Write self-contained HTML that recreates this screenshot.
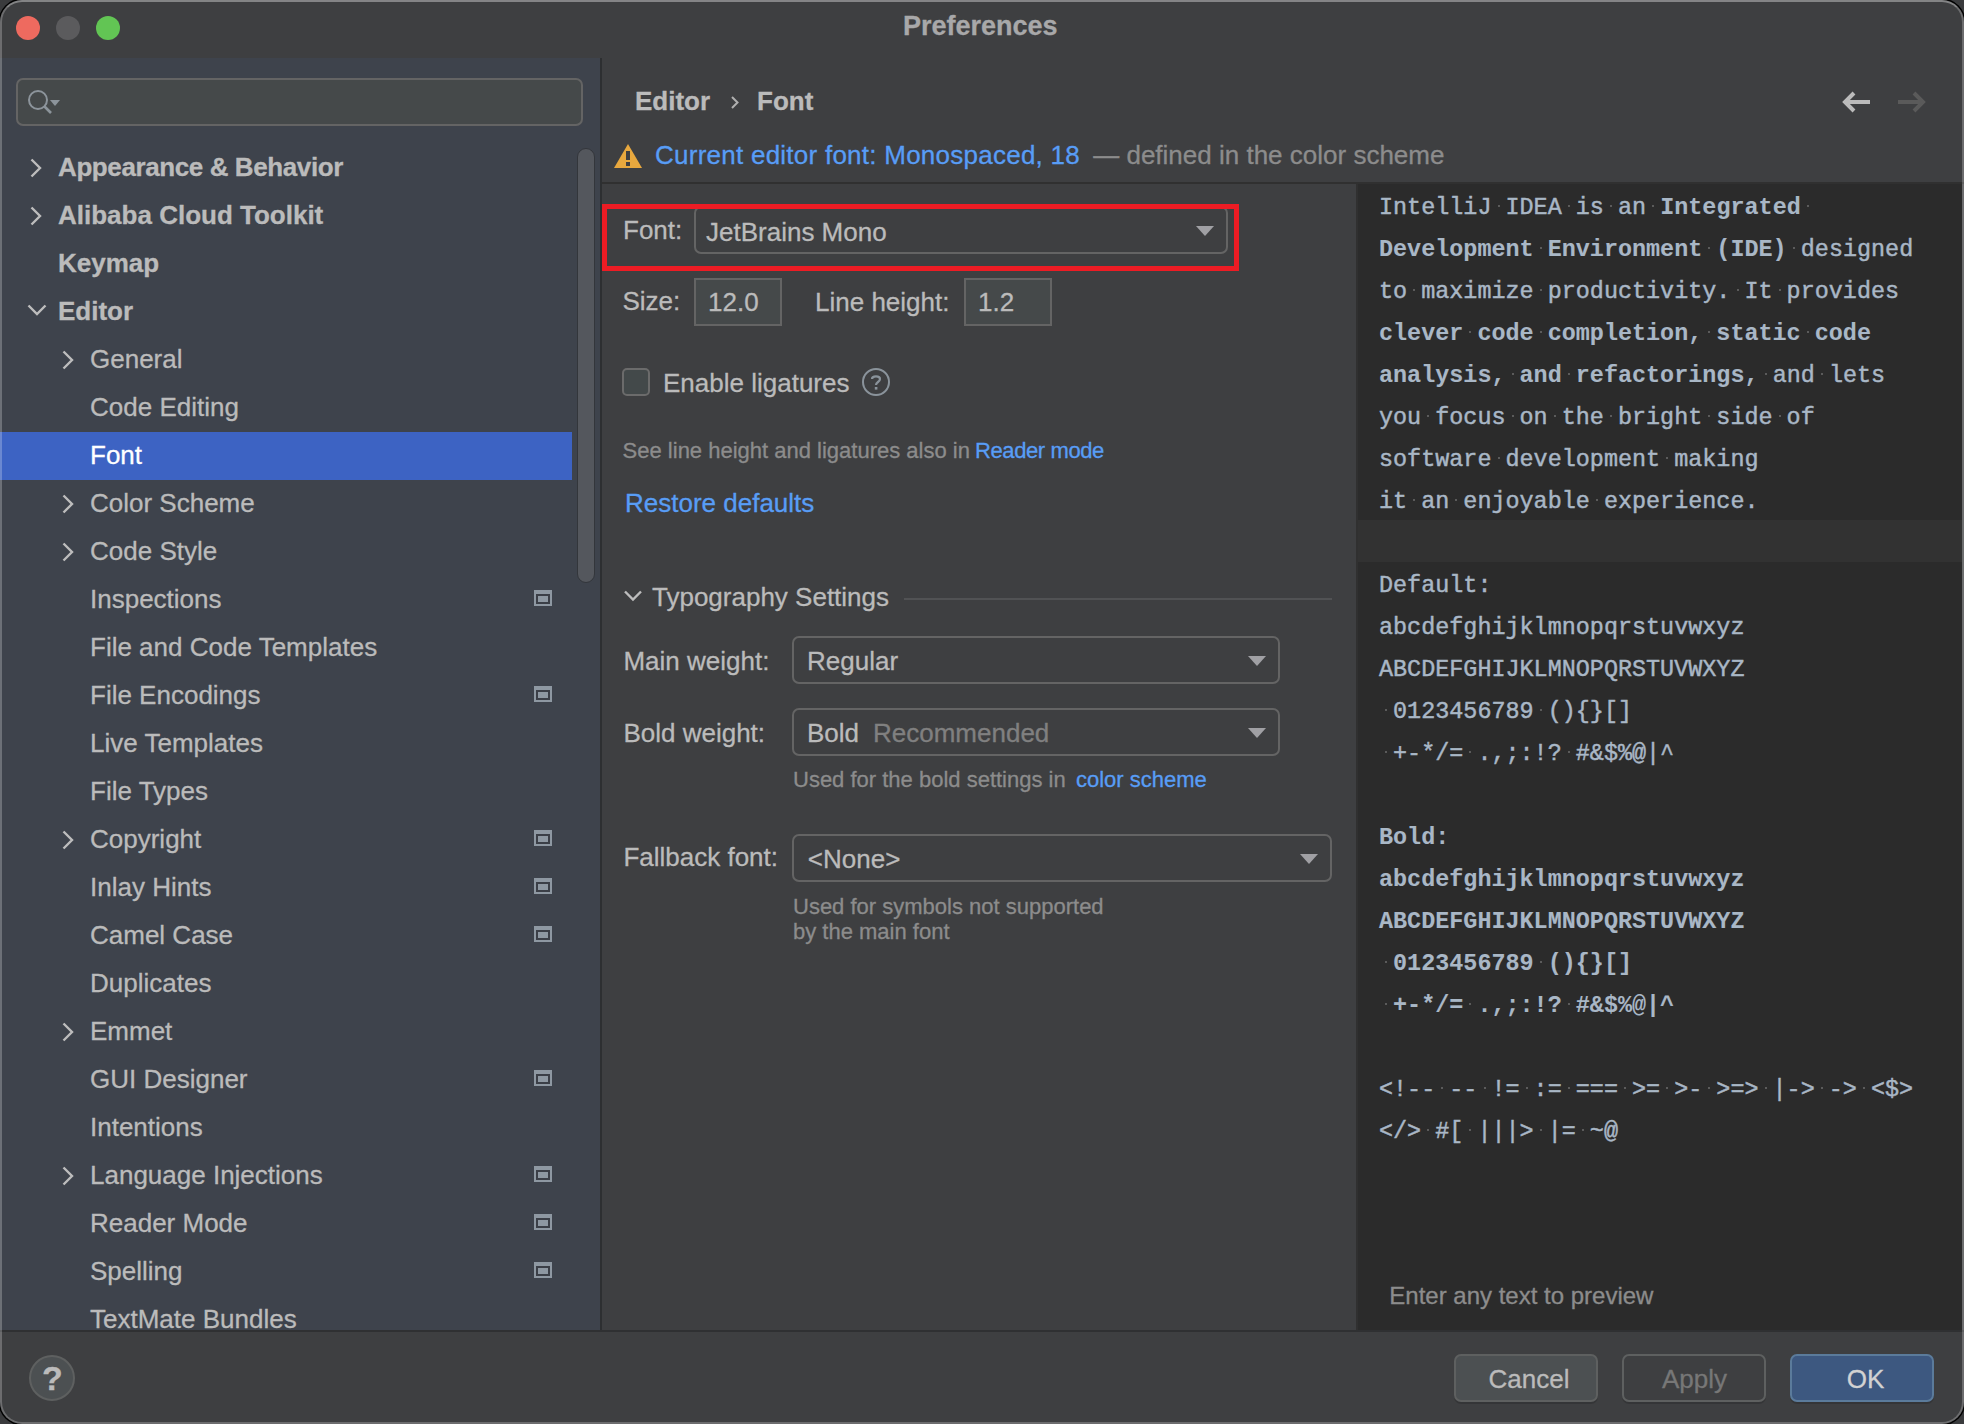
<!DOCTYPE html>
<html><head><meta charset="utf-8"><title>Preferences</title>
<style>
html,body{margin:0;padding:0;}
body{width:1964px;height:1424px;background:#3a3b3d;position:relative;overflow:hidden;font-family:'Liberation Sans',sans-serif;}
.win{position:absolute;left:0;top:0;width:1964px;height:1424px;border-radius:22px;overflow:hidden;background:#3e3f41;}
.t{position:absolute;white-space:pre;-webkit-text-stroke-width:0.3px;}
.m{position:absolute;white-space:pre;font-family:'Liberation Mono',monospace;font-size:23.43px;line-height:42px;color:#a9b7c6;-webkit-text-stroke:0.45px #a9b7c6;}
.m.b{-webkit-text-stroke:0.1px #a9b7c6;}
.dot{position:absolute;width:2px;height:2px;background:#5b5b5b;}
</style></head><body>
<div class="win">

<div style="position:absolute;left:0px;top:0px;width:1964px;height:58px;background:#3e3f41;"></div>
<div style="position:absolute;left:16px;top:16px;width:24px;height:24px;border-radius:50%;background:#ee6a5f;"></div>
<div style="position:absolute;left:56px;top:16px;width:24px;height:24px;border-radius:50%;background:#5b5b5d;"></div>
<div style="position:absolute;left:96px;top:16px;width:24px;height:24px;border-radius:50%;background:#62c554;"></div>
<div class="t" style="left:903.0px;top:12.7px;font-size:27px;line-height:27px;color:#a8a8a9;font-weight:bold;">Preferences</div>
<div style="position:absolute;left:0px;top:58px;width:600px;height:1272px;background:#3e434c;"></div>
<div style="position:absolute;left:600px;top:58px;width:2px;height:1272px;background:#2d2f31;"></div>
<div style="position:absolute;left:16px;top:78px;width:567px;height:48px;box-sizing:border-box;border:2px solid #646464;border-radius:7px;background:#45494a;"></div>
<svg style="position:absolute;left:26px;top:88px" width="40" height="30" viewBox="0 0 40 30">
<circle cx="12" cy="12" r="9" fill="none" stroke="#8c949b" stroke-width="2"/>
<line x1="18.5" y1="18.5" x2="25" y2="25" stroke="#8c949b" stroke-width="2.6"/>
<path d="M24 12 L34 12 L29 18 Z" fill="#8c949b"/>
</svg>
<div style="position:absolute;left:0;top:58px;width:600px;height:1272px;overflow:hidden;">
<div class="t" style="left:58.0px;top:96.0px;font-size:26px;line-height:26px;color:#bbbbbb;font-weight:bold;letter-spacing:-0.4px;">Appearance &amp; Behavior</div>
<svg style="position:absolute;left:28px;top:98.5px" width="16" height="22" viewBox="0 0 16 22"><path d="M3.5 2.5 L12 11 L3.5 19.5" fill="none" stroke="#bdbdbd" stroke-width="2.4"/></svg>
<div class="t" style="left:58.0px;top:144.0px;font-size:26px;line-height:26px;color:#bbbbbb;font-weight:bold;">Alibaba Cloud Toolkit</div>
<svg style="position:absolute;left:28px;top:146.5px" width="16" height="22" viewBox="0 0 16 22"><path d="M3.5 2.5 L12 11 L3.5 19.5" fill="none" stroke="#bdbdbd" stroke-width="2.4"/></svg>
<div class="t" style="left:58.0px;top:192.0px;font-size:26px;line-height:26px;color:#bbbbbb;font-weight:bold;">Keymap</div>
<div class="t" style="left:58.0px;top:240.0px;font-size:26px;line-height:26px;color:#bbbbbb;font-weight:bold;">Editor</div>
<svg style="position:absolute;left:26px;top:244px" width="22" height="16" viewBox="0 0 22 16"><path d="M2.5 3.5 L11 12 L19.5 3.5" fill="none" stroke="#bdbdbd" stroke-width="2.4"/></svg>
<div class="t" style="left:90.0px;top:288.0px;font-size:26px;line-height:26px;color:#bbbbbb;font-weight:normal;">General</div>
<svg style="position:absolute;left:60px;top:290.5px" width="16" height="22" viewBox="0 0 16 22"><path d="M3.5 2.5 L12 11 L3.5 19.5" fill="none" stroke="#bdbdbd" stroke-width="2.4"/></svg>
<div class="t" style="left:90.0px;top:336.0px;font-size:26px;line-height:26px;color:#bbbbbb;font-weight:normal;">Code Editing</div>
<div style="position:absolute;left:0px;top:374px;width:572px;height:48px;background:#3d63c3;"></div>
<div class="t" style="left:90.0px;top:384.0px;font-size:26px;line-height:26px;color:#ffffff;font-weight:normal;">Font</div>
<div class="t" style="left:90.0px;top:432.0px;font-size:26px;line-height:26px;color:#bbbbbb;font-weight:normal;">Color Scheme</div>
<svg style="position:absolute;left:60px;top:434.5px" width="16" height="22" viewBox="0 0 16 22"><path d="M3.5 2.5 L12 11 L3.5 19.5" fill="none" stroke="#bdbdbd" stroke-width="2.4"/></svg>
<div class="t" style="left:90.0px;top:480.0px;font-size:26px;line-height:26px;color:#bbbbbb;font-weight:normal;">Code Style</div>
<svg style="position:absolute;left:60px;top:482.5px" width="16" height="22" viewBox="0 0 16 22"><path d="M3.5 2.5 L12 11 L3.5 19.5" fill="none" stroke="#bdbdbd" stroke-width="2.4"/></svg>
<div class="t" style="left:90.0px;top:528.0px;font-size:26px;line-height:26px;color:#bbbbbb;font-weight:normal;">Inspections</div>
<div style="position:absolute;left:534px;top:532px;width:18px;height:16px;background:#8e98a2;"></div>
<div style="position:absolute;left:536px;top:536px;width:10px;height:6px;border:2px solid #3b3f47;background:#8e98a2;"></div>
<div class="t" style="left:90.0px;top:576.0px;font-size:26px;line-height:26px;color:#bbbbbb;font-weight:normal;">File and Code Templates</div>
<div class="t" style="left:90.0px;top:624.0px;font-size:26px;line-height:26px;color:#bbbbbb;font-weight:normal;">File Encodings</div>
<div style="position:absolute;left:534px;top:628px;width:18px;height:16px;background:#8e98a2;"></div>
<div style="position:absolute;left:536px;top:632px;width:10px;height:6px;border:2px solid #3b3f47;background:#8e98a2;"></div>
<div class="t" style="left:90.0px;top:672.0px;font-size:26px;line-height:26px;color:#bbbbbb;font-weight:normal;">Live Templates</div>
<div class="t" style="left:90.0px;top:720.0px;font-size:26px;line-height:26px;color:#bbbbbb;font-weight:normal;">File Types</div>
<div class="t" style="left:90.0px;top:768.0px;font-size:26px;line-height:26px;color:#bbbbbb;font-weight:normal;">Copyright</div>
<svg style="position:absolute;left:60px;top:770.5px" width="16" height="22" viewBox="0 0 16 22"><path d="M3.5 2.5 L12 11 L3.5 19.5" fill="none" stroke="#bdbdbd" stroke-width="2.4"/></svg>
<div style="position:absolute;left:534px;top:772px;width:18px;height:16px;background:#8e98a2;"></div>
<div style="position:absolute;left:536px;top:776px;width:10px;height:6px;border:2px solid #3b3f47;background:#8e98a2;"></div>
<div class="t" style="left:90.0px;top:816.0px;font-size:26px;line-height:26px;color:#bbbbbb;font-weight:normal;">Inlay Hints</div>
<div style="position:absolute;left:534px;top:820px;width:18px;height:16px;background:#8e98a2;"></div>
<div style="position:absolute;left:536px;top:824px;width:10px;height:6px;border:2px solid #3b3f47;background:#8e98a2;"></div>
<div class="t" style="left:90.0px;top:864.0px;font-size:26px;line-height:26px;color:#bbbbbb;font-weight:normal;">Camel Case</div>
<div style="position:absolute;left:534px;top:868px;width:18px;height:16px;background:#8e98a2;"></div>
<div style="position:absolute;left:536px;top:872px;width:10px;height:6px;border:2px solid #3b3f47;background:#8e98a2;"></div>
<div class="t" style="left:90.0px;top:912.0px;font-size:26px;line-height:26px;color:#bbbbbb;font-weight:normal;">Duplicates</div>
<div class="t" style="left:90.0px;top:960.0px;font-size:26px;line-height:26px;color:#bbbbbb;font-weight:normal;">Emmet</div>
<svg style="position:absolute;left:60px;top:962.5px" width="16" height="22" viewBox="0 0 16 22"><path d="M3.5 2.5 L12 11 L3.5 19.5" fill="none" stroke="#bdbdbd" stroke-width="2.4"/></svg>
<div class="t" style="left:90.0px;top:1008.0px;font-size:26px;line-height:26px;color:#bbbbbb;font-weight:normal;">GUI Designer</div>
<div style="position:absolute;left:534px;top:1012px;width:18px;height:16px;background:#8e98a2;"></div>
<div style="position:absolute;left:536px;top:1016px;width:10px;height:6px;border:2px solid #3b3f47;background:#8e98a2;"></div>
<div class="t" style="left:90.0px;top:1056.0px;font-size:26px;line-height:26px;color:#bbbbbb;font-weight:normal;">Intentions</div>
<div class="t" style="left:90.0px;top:1104.0px;font-size:26px;line-height:26px;color:#bbbbbb;font-weight:normal;">Language Injections</div>
<svg style="position:absolute;left:60px;top:1106.5px" width="16" height="22" viewBox="0 0 16 22"><path d="M3.5 2.5 L12 11 L3.5 19.5" fill="none" stroke="#bdbdbd" stroke-width="2.4"/></svg>
<div style="position:absolute;left:534px;top:1108px;width:18px;height:16px;background:#8e98a2;"></div>
<div style="position:absolute;left:536px;top:1112px;width:10px;height:6px;border:2px solid #3b3f47;background:#8e98a2;"></div>
<div class="t" style="left:90.0px;top:1152.0px;font-size:26px;line-height:26px;color:#bbbbbb;font-weight:normal;">Reader Mode</div>
<div style="position:absolute;left:534px;top:1156px;width:18px;height:16px;background:#8e98a2;"></div>
<div style="position:absolute;left:536px;top:1160px;width:10px;height:6px;border:2px solid #3b3f47;background:#8e98a2;"></div>
<div class="t" style="left:90.0px;top:1200.0px;font-size:26px;line-height:26px;color:#bbbbbb;font-weight:normal;">Spelling</div>
<div style="position:absolute;left:534px;top:1204px;width:18px;height:16px;background:#8e98a2;"></div>
<div style="position:absolute;left:536px;top:1208px;width:10px;height:6px;border:2px solid #3b3f47;background:#8e98a2;"></div>
<div class="t" style="left:90.0px;top:1248.0px;font-size:26px;line-height:26px;color:#bbbbbb;font-weight:normal;">TextMate Bundles</div>
<div style="position:absolute;left:577px;top:90px;width:18px;height:435px;box-sizing:border-box;border:1.5px solid #33363b;border-radius:9px;background:#54575d;"></div>
</div>
<div class="t" style="left:635.0px;top:87.6px;font-size:26px;line-height:26px;color:#bbbbbb;font-weight:bold;">Editor</div>
<svg style="position:absolute;left:728px;top:94px" width="14" height="18" viewBox="0 0 14 18"><path d="M4 3 L9.5 8.5 L4 14" fill="none" stroke="#b0b0b0" stroke-width="2"/></svg>
<div class="t" style="left:757.0px;top:87.6px;font-size:26px;line-height:26px;color:#bbbbbb;font-weight:bold;">Font</div>
<svg style="position:absolute;left:1840px;top:88px" width="34" height="28" viewBox="0 0 34 28"><path d="M5 14 L30 14 M14 5 L5 14 L14 23" fill="none" stroke="#bbbbbb" stroke-width="4" stroke-linejoin="miter"/></svg>
<svg style="position:absolute;left:1894px;top:88px" width="34" height="28" viewBox="0 0 34 28"><path d="M4 14 L29 14 M20 5 L29 14 L20 23" fill="none" stroke="#5a5a5a" stroke-width="4"/></svg>
<svg style="position:absolute;left:613px;top:143px" width="30" height="26" viewBox="0 0 30 26"><path d="M15 1 L29 25 L1 25 Z" fill="#e8a83e"/><rect x="13" y="8" width="4" height="9" fill="#3e3f41"/><rect x="13" y="19" width="4" height="4" fill="#3e3f41"/></svg>
<div class="t" style="left:655.0px;top:142.3px;font-size:26px;line-height:26px;color:#589df6;font-weight:normal;letter-spacing:0.25px;">Current editor font: Monospaced, 18</div>
<div class="t" style="left:1086.0px;top:142.3px;font-size:26px;line-height:26px;color:#8c8c8c;font-weight:normal;"> — defined in the color scheme</div>
<div style="position:absolute;left:602px;top:182px;width:1362px;height:2px;background:#303030;"></div>
<div style="position:absolute;left:694px;top:206px;width:534px;height:48px;box-sizing:border-box;border:2px solid #646464;border-radius:7px;background:#3e3f41;"></div>
<div class="t" style="left:623.0px;top:216.5px;font-size:26px;line-height:26px;color:#bbbbbb;font-weight:normal;">Font:</div>
<div class="t" style="left:706.0px;top:218.5px;font-size:26px;line-height:26px;color:#bbbbbb;font-weight:normal;">JetBrains Mono</div>
<svg style="position:absolute;left:1196px;top:226px" width="18" height="10" viewBox="0 0 18 10"><path d="M0 0 L18 0 L9 10 Z" fill="#a0a0a4"/></svg>
<div style="position:absolute;left:602px;top:204px;width:637px;height:67px;box-sizing:border-box;border:5px solid #ed1c24;"></div>
<div class="t" style="left:622.5px;top:288.3px;font-size:26px;line-height:26px;color:#bbbbbb;font-weight:normal;">Size:</div>
<div style="position:absolute;left:694px;top:278px;width:88px;height:48px;box-sizing:border-box;border:2px solid #646464;background:#45494a;"></div>
<div class="t" style="left:708.0px;top:288.5px;font-size:26px;line-height:26px;color:#bbbbbb;font-weight:normal;">12.0</div>
<div class="t" style="left:815.0px;top:288.6px;font-size:26px;line-height:26px;color:#bbbbbb;font-weight:normal;">Line height:</div>
<div style="position:absolute;left:964px;top:278px;width:88px;height:48px;box-sizing:border-box;border:2px solid #646464;background:#45494a;"></div>
<div class="t" style="left:978.0px;top:288.5px;font-size:26px;line-height:26px;color:#bbbbbb;font-weight:normal;">1.2</div>
<div style="position:absolute;left:622px;top:368px;width:28px;height:28px;box-sizing:border-box;border:2px solid #6b6b6b;border-radius:5px;background:#43494a;"></div>
<div class="t" style="left:663.0px;top:370.1px;font-size:26px;line-height:26px;color:#bbbbbb;font-weight:normal;">Enable ligatures</div>
<svg style="position:absolute;left:862px;top:368px" width="28" height="28" viewBox="0 0 28 28"><circle cx="14" cy="14" r="13" fill="none" stroke="#8a939b" stroke-width="2"/><path d="M10 11 C10 7.5 18 7.5 18 11 C18 14 14 14 14 17" fill="none" stroke="#8a939b" stroke-width="2.2"/><rect x="12.8" y="19" width="2.6" height="2.6" fill="#8a939b"/></svg>
<div class="t" style="left:622.6px;top:439.5px;font-size:22px;line-height:22px;color:#8c8c8c;font-weight:normal;">See line height and ligatures also in </div>
<div class="t" style="left:975.0px;top:439.5px;font-size:22px;line-height:22px;color:#589df6;font-weight:normal;letter-spacing:-0.4px;">Reader mode</div>
<div class="t" style="left:625.0px;top:489.6px;font-size:26px;line-height:26px;color:#589df6;font-weight:normal;">Restore defaults</div>
<svg style="position:absolute;left:622px;top:588px" width="22" height="16" viewBox="0 0 22 16"><path d="M3 3.5 L11 11.5 L19 3.5" fill="none" stroke="#bdbdbd" stroke-width="2.4"/></svg>
<div class="t" style="left:652.0px;top:584.4px;font-size:26px;line-height:26px;color:#bbbbbb;font-weight:normal;">Typography Settings</div>
<div style="position:absolute;left:904px;top:598px;width:428px;height:2px;background:#515254;"></div>
<div class="t" style="left:623.4px;top:647.9px;font-size:26px;line-height:26px;color:#bbbbbb;font-weight:normal;">Main weight:</div>
<div style="position:absolute;left:792px;top:636px;width:488px;height:48px;box-sizing:border-box;border:2px solid #646464;border-radius:7px;"></div>
<div class="t" style="left:807.0px;top:648.0px;font-size:26px;line-height:26px;color:#bbbbbb;font-weight:normal;">Regular</div>
<svg style="position:absolute;left:1248px;top:656px" width="18" height="10" viewBox="0 0 18 10"><path d="M0 0 L18 0 L9 10 Z" fill="#a0a0a4"/></svg>
<div class="t" style="left:623.4px;top:720.3px;font-size:26px;line-height:26px;color:#bbbbbb;font-weight:normal;">Bold weight:</div>
<div style="position:absolute;left:792px;top:708px;width:488px;height:48px;box-sizing:border-box;border:2px solid #646464;border-radius:7px;"></div>
<div class="t" style="left:807.0px;top:720.3px;font-size:26px;line-height:26px;color:#bbbbbb;font-weight:normal;">Bold</div>
<div class="t" style="left:873.0px;top:720.3px;font-size:26px;line-height:26px;color:#808080;font-weight:normal;">Recommended</div>
<svg style="position:absolute;left:1248px;top:728px" width="18" height="10" viewBox="0 0 18 10"><path d="M0 0 L18 0 L9 10 Z" fill="#a0a0a4"/></svg>
<div class="t" style="left:793.0px;top:769.4px;font-size:22px;line-height:22px;color:#8c8c8c;font-weight:normal;">Used for the bold settings in </div>
<div class="t" style="left:1076.0px;top:769.4px;font-size:22px;line-height:22px;color:#589df6;font-weight:normal;">color scheme</div>
<div class="t" style="left:623.4px;top:844.0px;font-size:26px;line-height:26px;color:#bbbbbb;font-weight:normal;">Fallback font:</div>
<div style="position:absolute;left:792px;top:834px;width:540px;height:48px;box-sizing:border-box;border:2px solid #646464;border-radius:7px;"></div>
<div class="t" style="left:807.8px;top:846.2px;font-size:26px;line-height:26px;color:#bbbbbb;font-weight:normal;">&lt;None&gt;</div>
<svg style="position:absolute;left:1300px;top:854px" width="18" height="10" viewBox="0 0 18 10"><path d="M0 0 L18 0 L9 10 Z" fill="#a0a0a4"/></svg>
<div class="t" style="left:793.0px;top:895.5px;font-size:22px;line-height:22px;color:#8c8c8c;font-weight:normal;">Used for symbols not supported</div>
<div class="t" style="left:793.0px;top:921.4px;font-size:22px;line-height:22px;color:#8c8c8c;font-weight:normal;">by the main font</div>
<div style="position:absolute;left:1356px;top:184px;width:606px;height:1146px;background:#2b2b2b;"></div>
<div style="position:absolute;left:1356px;top:520px;width:606px;height:42px;background:#323232;"></div>
<div style="position:absolute;left:1356px;top:184px;width:2px;height:1146px;background:#303030;"></div>
<div class="m" style="left:1379.00px;top:187px;font-weight:normal">IntelliJ IDEA is an </div>
<div class="dot" style="left:1497.5px;top:204.5px"></div>
<div class="dot" style="left:1567.8px;top:204.5px"></div>
<div class="dot" style="left:1610.0px;top:204.5px"></div>
<div class="dot" style="left:1652.2px;top:204.5px"></div>
<div class="m b" style="left:1660.20px;top:187px;font-weight:bold">Integrated </div>
<div class="dot" style="left:1806.8px;top:204.5px"></div>
<div class="m b" style="left:1379.00px;top:229px;font-weight:bold">Development Environment (IDE)</div>
<div class="dot" style="left:1539.7px;top:246.5px"></div>
<div class="dot" style="left:1708.4px;top:246.5px"></div>
<div class="m" style="left:1786.74px;top:229px;font-weight:normal"> designed</div>
<div class="dot" style="left:1792.8px;top:246.5px"></div>
<div class="m" style="left:1379.00px;top:271px;font-weight:normal">to maximize productivity. It provides</div>
<div class="dot" style="left:1413.2px;top:288.5px"></div>
<div class="dot" style="left:1539.7px;top:288.5px"></div>
<div class="dot" style="left:1736.5px;top:288.5px"></div>
<div class="dot" style="left:1778.7px;top:288.5px"></div>
<div class="m b" style="left:1379.00px;top:313px;font-weight:bold">clever code completion, static code</div>
<div class="dot" style="left:1469.4px;top:330.5px"></div>
<div class="dot" style="left:1539.7px;top:330.5px"></div>
<div class="dot" style="left:1708.4px;top:330.5px"></div>
<div class="dot" style="left:1806.8px;top:330.5px"></div>
<div class="m b" style="left:1379.00px;top:355px;font-weight:bold">analysis, and refactorings,</div>
<div class="dot" style="left:1511.6px;top:372.5px"></div>
<div class="dot" style="left:1567.8px;top:372.5px"></div>
<div class="m" style="left:1758.62px;top:355px;font-weight:normal"> and lets</div>
<div class="dot" style="left:1764.7px;top:372.5px"></div>
<div class="dot" style="left:1820.9px;top:372.5px"></div>
<div class="m" style="left:1379.00px;top:397px;font-weight:normal">you focus on the bright side of</div>
<div class="dot" style="left:1427.2px;top:414.5px"></div>
<div class="dot" style="left:1511.6px;top:414.5px"></div>
<div class="dot" style="left:1553.8px;top:414.5px"></div>
<div class="dot" style="left:1610.0px;top:414.5px"></div>
<div class="dot" style="left:1708.4px;top:414.5px"></div>
<div class="dot" style="left:1778.7px;top:414.5px"></div>
<div class="m" style="left:1379.00px;top:439px;font-weight:normal">software development making</div>
<div class="dot" style="left:1497.5px;top:456.5px"></div>
<div class="dot" style="left:1666.2px;top:456.5px"></div>
<div class="m" style="left:1379.00px;top:481px;font-weight:normal">it an enjoyable experience.</div>
<div class="dot" style="left:1413.2px;top:498.5px"></div>
<div class="dot" style="left:1455.3px;top:498.5px"></div>
<div class="dot" style="left:1595.9px;top:498.5px"></div>
<div class="m" style="left:1379.00px;top:565px;font-weight:normal">Default:</div>
<div class="m" style="left:1379.00px;top:607px;font-weight:normal">abcdefghijklmnopqrstuvwxyz</div>
<div class="m" style="left:1379.00px;top:649px;font-weight:normal">ABCDEFGHIJKLMNOPQRSTUVWXYZ</div>
<div class="m" style="left:1379.00px;top:691px;font-weight:normal"> 0123456789 (){}[]</div>
<div class="dot" style="left:1385.0px;top:708.5px"></div>
<div class="dot" style="left:1539.7px;top:708.5px"></div>
<div class="m" style="left:1379.00px;top:733px;font-weight:normal"> +-*/= .,;:!? #&amp;$%@|^</div>
<div class="dot" style="left:1385.0px;top:750.5px"></div>
<div class="dot" style="left:1469.4px;top:750.5px"></div>
<div class="dot" style="left:1567.8px;top:750.5px"></div>
<div class="m b" style="left:1379.00px;top:817px;font-weight:bold">Bold:</div>
<div class="m b" style="left:1379.00px;top:859px;font-weight:bold">abcdefghijklmnopqrstuvwxyz</div>
<div class="m b" style="left:1379.00px;top:901px;font-weight:bold">ABCDEFGHIJKLMNOPQRSTUVWXYZ</div>
<div class="m b" style="left:1379.00px;top:943px;font-weight:bold"> 0123456789 (){}[]</div>
<div class="dot" style="left:1385.0px;top:960.5px"></div>
<div class="dot" style="left:1539.7px;top:960.5px"></div>
<div class="m b" style="left:1379.00px;top:985px;font-weight:bold"> +-*/= .,;:!? #&amp;$%@|^</div>
<div class="dot" style="left:1385.0px;top:1002.5px"></div>
<div class="dot" style="left:1469.4px;top:1002.5px"></div>
<div class="dot" style="left:1567.8px;top:1002.5px"></div>
<div class="m" style="left:1379.00px;top:1069px;font-weight:normal">&lt;!-- -- != := === &gt;= &gt;- &gt;=&gt; |-&gt; -&gt; &lt;$&gt;</div>
<div class="dot" style="left:1441.3px;top:1086.5px"></div>
<div class="dot" style="left:1483.5px;top:1086.5px"></div>
<div class="dot" style="left:1525.6px;top:1086.5px"></div>
<div class="dot" style="left:1567.8px;top:1086.5px"></div>
<div class="dot" style="left:1624.0px;top:1086.5px"></div>
<div class="dot" style="left:1666.2px;top:1086.5px"></div>
<div class="dot" style="left:1708.4px;top:1086.5px"></div>
<div class="dot" style="left:1764.7px;top:1086.5px"></div>
<div class="dot" style="left:1820.9px;top:1086.5px"></div>
<div class="dot" style="left:1863.1px;top:1086.5px"></div>
<div class="m" style="left:1379.00px;top:1111px;font-weight:normal">&lt;/&gt; #[ |||&gt; |= ~@</div>
<div class="dot" style="left:1427.2px;top:1128.5px"></div>
<div class="dot" style="left:1469.4px;top:1128.5px"></div>
<div class="dot" style="left:1539.7px;top:1128.5px"></div>
<div class="dot" style="left:1581.9px;top:1128.5px"></div>
<div class="t" style="left:1389.3px;top:1283.8px;font-size:24px;line-height:24px;color:#8c8c8c;font-weight:normal;">Enter any text to preview</div>
<div style="position:absolute;left:0px;top:1330px;width:1964px;height:2px;background:#2f3032;"></div>
<div style="position:absolute;left:0px;top:1332px;width:1964px;height:92px;background:#3e3f41;"></div>
<div style="position:absolute;left:29px;top:1355px;width:46px;height:46px;box-sizing:border-box;border:2px solid #5e6060;border-radius:50%;background:#4c5052;"></div>
<div class="t" style="left:42.0px;top:1361.2px;font-size:34px;line-height:34px;color:#bbbbbb;font-weight:bold;">?</div>
<div style="position:absolute;left:1454px;top:1354px;width:144px;height:48px;box-sizing:border-box;border:2px solid #5e6060;border-radius:7px;background:#4c5052;box-shadow:0 2px 0 rgba(0,0,0,0.15);"></div>
<div class="t" style="left:1488.5px;top:1366.1px;font-size:26px;line-height:26px;color:#bbbbbb;font-weight:normal;">Cancel</div>
<div style="position:absolute;left:1622px;top:1354px;width:144px;height:48px;box-sizing:border-box;border:2px solid #5e6060;border-radius:7px;background:transparent;box-shadow:0 2px 0 rgba(0,0,0,0.15);"></div>
<div class="t" style="left:1662.0px;top:1366.1px;font-size:26px;line-height:26px;color:#777777;font-weight:normal;">Apply</div>
<div style="position:absolute;left:1790px;top:1354px;width:144px;height:48px;box-sizing:border-box;border:2px solid #5b7b9b;border-radius:7px;background:#3d5880;box-shadow:0 2px 0 rgba(0,0,0,0.15);"></div>
<div class="t" style="left:1846.7px;top:1366.1px;font-size:26px;line-height:26px;color:#d2d2d2;font-weight:normal;">OK</div>
</div>
<div style="position:absolute;left:0;top:0;width:1964px;height:1424px;box-sizing:border-box;border:2px solid rgba(255,255,255,0.24);border-top-color:rgba(255,255,255,0.36);border-radius:22px;pointer-events:none;box-shadow:0 0 0 1.5px #000;"></div>
</body></html>
